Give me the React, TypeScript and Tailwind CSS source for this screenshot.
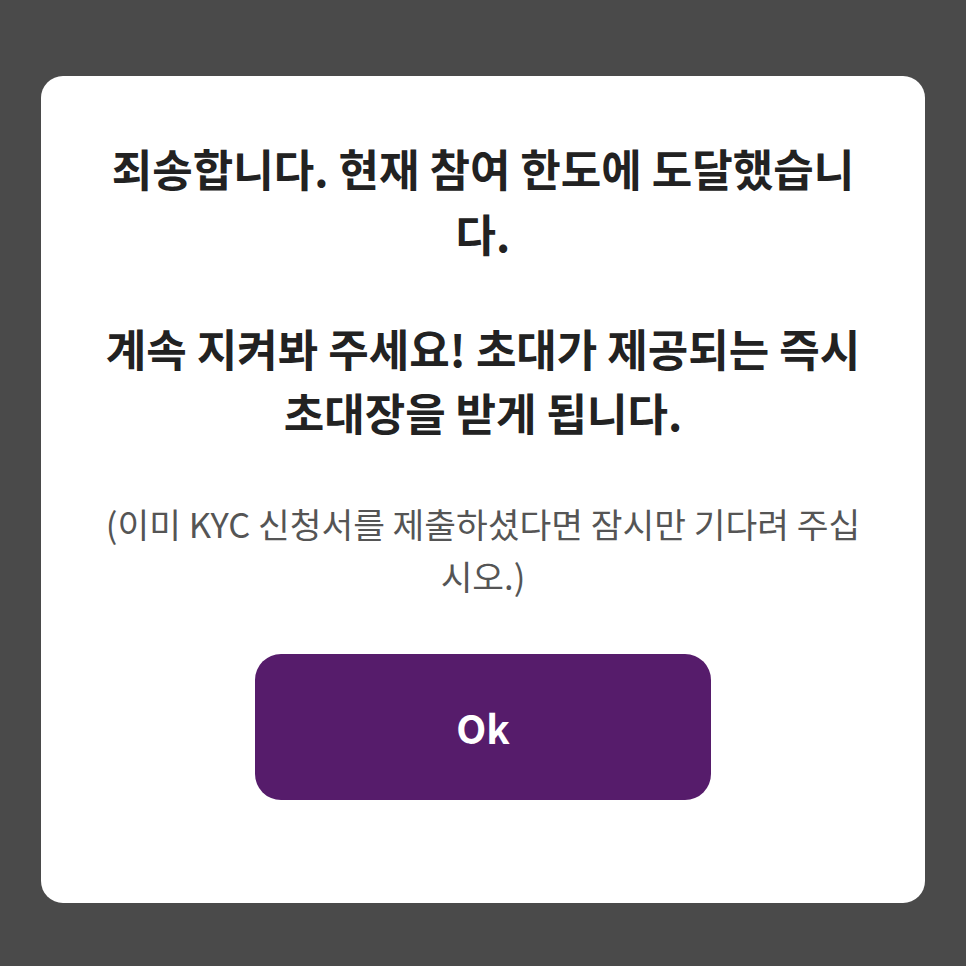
import React from 'react';

export default function App() {
  return (
    <div
      className="w-full min-h-screen bg-[#4a4a4a] pt-[76px] pb-[63px] px-[41px]"
      style={{ fontFamily: '"Noto Sans CJK KR", "Noto Sans", sans-serif' }}
    >
      <div className="bg-white rounded-[22px] h-[827px] px-[53px] pt-[60px] flex flex-col items-center text-center">
        <p className="text-[44px] font-bold leading-[65px] text-[#222222]">
          죄송합니다. 현재 참여 한도에 도달했습니다.
        </p>
        <p className="mt-[50px] text-[44px] font-bold leading-[64px] text-[#222222]">
          계속 지켜봐 주세요! 초대가 제공되는 즉시 초대장을 받게 됩니다.
        </p>
        <p className="mt-[53px] text-[34.5px] leading-[52px] text-[#555555]">
          (이미 KYC 신청서를 제출하셨다면 잠시만 기다려 주십시오.)
        </p>
        <button className="mt-[53px] w-[456px] h-[146px] shrink-0 rounded-[26px] bg-[#561c6b] text-white text-[39px] font-bold">
          Ok
        </button>
      </div>
    </div>
  );
}
